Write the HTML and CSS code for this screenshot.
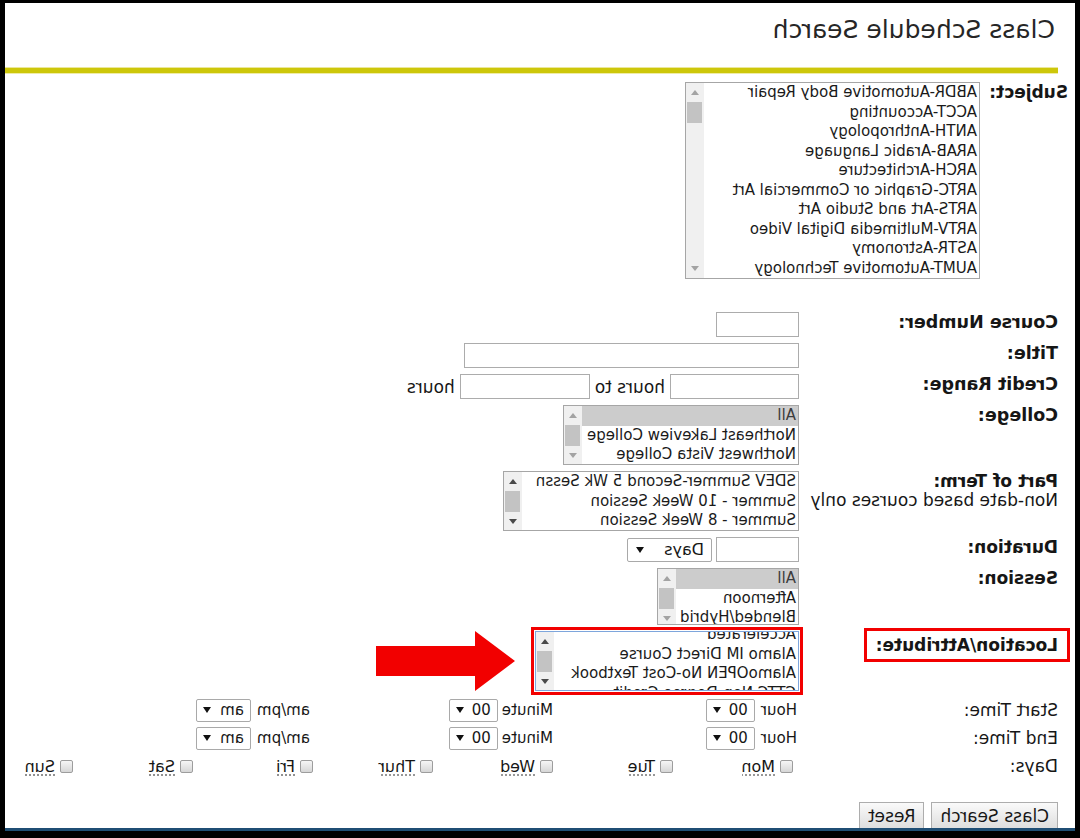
FILE: index.html
```html
<!DOCTYPE html>
<html lang="en">
<head>
<meta charset="utf-8">
<title>Class Schedule Search</title>
<link rel="stylesheet" href="styles.css">
</head>
<body>
<div class="frame">
  <div class="page">
    <h1 class="title">Class Schedule Search</h1>
    <div class="rule"></div>

    <div class="subject-row">
      <div class="lbl subj-lbl">Subject:</div>
      <div class="listbox lb-subject">
        <div class="lb-items">
          <div class="opt">ABDR-Automotive Body Repair</div>
          <div class="opt">ACCT-Accounting</div>
          <div class="opt">ANTH-Anthropology</div>
          <div class="opt">ARAB-Arabic Language</div>
          <div class="opt">ARCH-Architecture</div>
          <div class="opt">ARTC-Graphic or Commercial Art</div>
          <div class="opt">ARTS-Art and Studio Art</div>
          <div class="opt">ARTV-Multimedia Digital Video</div>
          <div class="opt">ASTR-Astronomy</div>
          <div class="opt">AUMT-Automotive Technology</div>
        </div>
        <div class="sbar"><span class="sb-btn up"></span><span class="thumb"></span><span class="sb-fill"></span><span class="sb-btn down"></span></div>
      </div>
    </div>

    <div class="form">
      <div class="lbl-lg">Course Number:</div>
      <div class="field"><input class="txt w-num" type="text"></div>

      <div class="lbl-lg">Title:</div>
      <div class="field"><input class="txt w-title" type="text"></div>

      <div class="lbl-lg">Credit Range:</div>
      <div class="field">
        <input class="txt w-cr1" type="text">
        <span class="plain">hours to</span>
        <input class="txt w-cr2" type="text">
        <span class="plain">hours</span>
      </div>

      <div class="lbl-lg">College:</div>
      <div class="field">
        <div class="listbox lb-college">
          <div class="lb-items">
            <div class="opt selected">All</div>
            <div class="opt">Northeast Lakeview College</div>
            <div class="opt">Northwest Vista College</div>
          </div>
          <div class="sbar"><span class="sb-btn up"></span><span class="thumb"></span><span class="sb-fill"></span><span class="sb-btn down"></span></div>
        </div>
      </div>

      <div class="term-lbl">
        <div class="lbl">Part of Term:</div>
        <div class="note">Non-date based courses only</div>
      </div>
      <div class="field">
        <div class="listbox lb-term">
          <div class="lb-items">
            <div class="opt">SDEV Summer-Second 5 Wk Sessn</div>
            <div class="opt">Summer - 10 Week Session</div>
            <div class="opt">Summer - 8 Week Session</div>
          </div>
          <div class="sbar dark"><span class="sb-btn up"></span><span class="thumb"></span><span class="sb-fill"></span><span class="sb-btn down"></span></div>
        </div>
      </div>

      <div class="lbl">Duration:</div>
      <div class="field dur">
        <input class="txt w-num" type="text">
        <div class="sel sel-days"><span>Days</span><span class="caret"></span></div>
      </div>

      <div class="lbl">Session:</div>
      <div class="field">
        <div class="listbox lb-session">
          <div class="lb-items">
            <div class="opt selected">All</div>
            <div class="opt">Afternoon</div>
            <div class="opt">Blended/Hybrid</div>
          </div>
          <div class="sbar"><span class="sb-btn up"></span><span class="thumb"></span><span class="sb-fill"></span><span class="sb-btn down"></span></div>
        </div>
      </div>

      <div class="loc-lbl"><span class="lbl mark">Location/Attribute:</span></div>
      <div class="field">
        <div class="listbox lb-loc">
          <div class="lb-items">
            <div class="scrolled">
              <div class="opt">Accelerated</div>
              <div class="opt">Alamo IM Direct Course</div>
              <div class="opt">AlamoOPEN No-Cost Textbook</div>
              <div class="opt">CTTC Non-Degree Credit</div>
            </div>
          </div>
          <div class="sbar dark"><span class="sb-btn up"></span><span class="thumb"></span><span class="sb-fill"></span><span class="sb-btn down"></span></div>
        </div>
        <svg class="pointer" width="139" height="60" viewBox="0 0 139 60" aria-hidden="true">
          <polygon points="0,30 40,0 40,15 139,15 139,45 40,45 40,60" fill="#f20000"/>
        </svg>
      </div>
    </div>

    <div class="times">
      <div class="trow">
        <div class="tlabel">Start Time:</div>
        <div class="tcell tc1"><span>Hour</span><div class="sel sel-num"><span>00</span><span class="caret"></span></div></div>
        <div class="tcell tc2"><span>Minute</span><div class="sel sel-num"><span>00</span><span class="caret"></span></div></div>
        <div class="tcell"><span>am/pm</span><div class="sel sel-am"><span>am</span><span class="caret"></span></div></div>
      </div>
      <div class="trow">
        <div class="tlabel">End Time:</div>
        <div class="tcell tc1"><span>Hour</span><div class="sel sel-num"><span>00</span><span class="caret"></span></div></div>
        <div class="tcell tc2"><span>Minute</span><div class="sel sel-num"><span>00</span><span class="caret"></span></div></div>
        <div class="tcell"><span>am/pm</span><div class="sel sel-am"><span>am</span><span class="caret"></span></div></div>
      </div>
      <div class="trow">
        <div class="tlabel">Days:</div>
        <div class="days">
          <div class="day"><span class="cb"></span><span class="dname">Mon</span></div>
          <div class="day"><span class="cb"></span><span class="dname">Tue</span></div>
          <div class="day"><span class="cb"></span><span class="dname">Wed</span></div>
          <div class="day"><span class="cb"></span><span class="dname">Thur</span></div>
          <div class="day"><span class="cb"></span><span class="dname">Fri</span></div>
          <div class="day"><span class="cb"></span><span class="dname">Sat</span></div>
          <div class="day"><span class="cb"></span><span class="dname">Sun</span></div>
        </div>
      </div>
    </div>

    <div class="buttons">
      <button class="btn" type="button">Class Search</button>
      <button class="btn" type="button">Reset</button>
    </div>
  </div>
</div>
</body>
</html>
```

FILE: styles.css
```css
* { box-sizing: border-box; }

body {
  margin: 0;
  background: #000;
  font-family: "DejaVu Sans", Verdana, sans-serif;
  color: #161616;
}

.frame {
  width: 1080px;
  height: 838px;
  border-style: solid;
  border-color: #000;
  border-width: 3px 5px 7px 5px;
  background: #fff;
  overflow: hidden;
  transform: scaleX(-1);
}

.page {
  height: 100%;
  border-bottom: 3px solid #1f4e74;
  overflow: hidden;
}

.title {
  margin: 12px 0 0 20px;
  font-size: 25px;
  font-weight: normal;
  line-height: 30px;
  color: #262626;
}

.rule {
  margin: 22px 0 0 17px;
  height: 7px;
  background: #cdc70a;
  border-top: 1px solid #ebe79a;
  border-bottom: 1px solid #efeca8;
}

.subject-row {
  display: flex;
  align-items: flex-start;
  margin-top: 8px;
  padding-left: 7px;
}

.subj-lbl { width: 88px; }

.lbl {
  font-size: 17px;
  font-weight: bold;
  line-height: 20px;
  white-space: nowrap;
}

.lbl-lg {
  font-size: 17.5px;
  font-weight: bold;
  line-height: 20px;
  white-space: nowrap;
}

.note {
  font-size: 17px;
  line-height: 19px;
  white-space: nowrap;
}

.plain {
  font-size: 17px;
  white-space: nowrap;
}

.form {
  display: grid;
  grid-template-columns: 259px auto;
  row-gap: 6px;
  align-items: start;
  justify-items: start;
  margin-top: 33px;
  padding-left: 17px;
}

.field {
  display: flex;
  align-items: center;
  gap: 5px;
  position: relative;
}

.dur { gap: 4px; }

.txt {
  display: block;
  height: 25px;
  margin: 0;
  padding: 0 3px;
  border: 1px solid #acacac;
  background: #fff;
  font: 15px "DejaVu Sans", Verdana, sans-serif;
}

.w-num { width: 83px; }
.w-title { width: 335px; }
.w-cr1 { width: 129px; }
.w-cr2 { width: 130px; }

/* list boxes */
.listbox {
  display: flex;
  border: 1px solid #a6a6a6;
  background: #fff;
  overflow: hidden;
}

.lb-items {
  flex: 1;
  min-width: 0;
  overflow: hidden;
}

.opt {
  font-size: 15px;
  line-height: 19.5px;
  padding-left: 2px;
  white-space: nowrap;
  overflow: hidden;
  color: #1a1a1a;
}

.opt.selected {
  background: #cccccc;
  color: #3c3c3c;
}

.sbar {
  width: 18px;
  flex: none;
  display: flex;
  flex-direction: column;
  align-items: center;
  background: #f0f0f0;
}

.sb-btn {
  width: 100%;
  height: 19px;
  display: flex;
  align-items: center;
  justify-content: center;
  flex: none;
}

.sb-btn::after {
  content: "";
  width: 0;
  height: 0;
  border-left: 4px solid transparent;
  border-right: 4px solid transparent;
}

.up::after { border-bottom: 5px solid #a3a3a3; }
.down::after { border-top: 5px solid #a3a3a3; }
.dark .up::after { border-bottom-color: #4a4a4a; }
.dark .down::after { border-top-color: #4a4a4a; }

.thumb {
  width: 15px;
  height: 21px;
  flex: none;
  background: #c3c3c3;
}

.sb-fill { flex: 1; }

.lb-subject { width: 295px; height: 197px; }
.lb-college { width: 236px; height: 60px; }
.lb-term { width: 296px; height: 60px; }
.lb-session { width: 142px; height: 57px; }

.lb-loc {
  width: 264px;
  height: 60px;
  border-color: #7ea6dc;
  outline: 3px solid #f20000;
  outline-offset: 1px;
}

.scrolled { margin-top: -7px; }

.pointer {
  position: absolute;
  left: 284px;
  top: 0;
}

.mark {
  display: inline-block;
  margin: -3px 0 0 -12px;
  padding: 4px 9px;
  border: 3px solid #f20000;
}

/* selects */
.sel {
  display: flex;
  align-items: center;
  justify-content: space-between;
  height: 23px;
  padding: 0 6px;
  border: 1px solid #a9a9a9;
  border-radius: 2px;
  background: #fff;
  font-size: 15px;
  white-space: nowrap;
}

.caret {
  width: 0;
  height: 0;
  border-left: 4px solid transparent;
  border-right: 4px solid transparent;
  border-top: 6px solid #111;
}

.sel-days { width: 85px; height: 24px; font-size: 16px; padding: 0 8px 0 7px; }
.sel-num { width: 49px; }
.sel-am { width: 55px; }

/* time rows */
.times {
  margin-top: 5px;
  padding-left: 17px;
}

.trow {
  display: flex;
  align-items: center;
  height: 28px;
}

.tlabel {
  width: 259px;
  flex: none;
  font-size: 17px;
  white-space: nowrap;
}

.tcell {
  display: flex;
  align-items: center;
  gap: 6px;
  font-size: 15px;
}

.tc1 { width: 246px; padding-left: 2px; }
.tc2 { width: 243px; gap: 4px; }

.days {
  display: grid;
  grid-template-columns: repeat(6, 120px) auto;
}

.day {
  display: flex;
  align-items: center;
  gap: 5px;
  padding-left: 6px;
  font-size: 16px;
}

.cb {
  width: 13px;
  height: 13px;
  border: 1px solid #9d9d9d;
  border-radius: 2px;
  background: linear-gradient(#f6f6f6, #d6d6d6);
}

.dname {
  text-decoration: underline dotted #777;
  text-underline-offset: 3px;
}

.buttons {
  display: flex;
  gap: 7px;
  margin-top: 22px;
  padding-left: 17px;
}

.btn {
  height: 27px;
  padding: 0 8px;
  border: 1px solid #adadad;
  background: linear-gradient(#fafafa, #dedede);
  color: #161616;
  font: 17px "DejaVu Sans", Verdana, sans-serif;
}
```
